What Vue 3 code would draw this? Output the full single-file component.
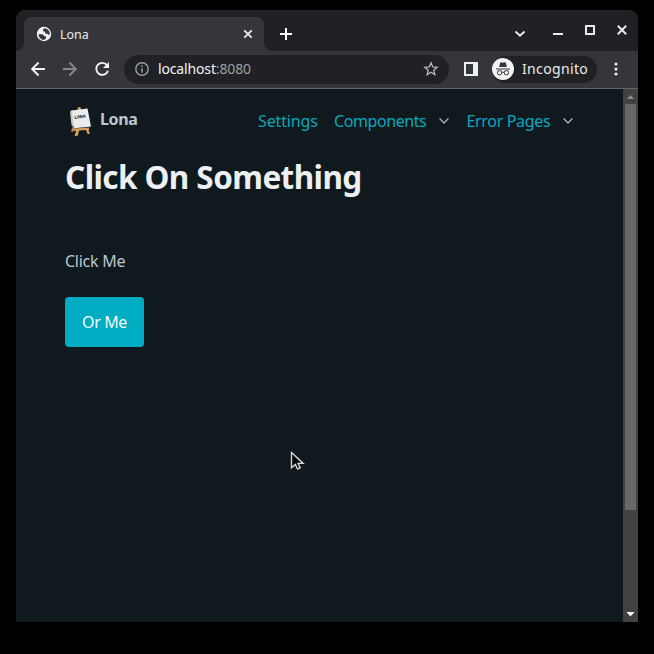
<script setup>
const menus = [
  { label: 'Settings', cls: 'settings', arrow: false },
  { label: 'Components', cls: 'components', arrow: true },
  { label: 'Error Pages', cls: 'errors', arrow: true },
]
</script>

<template>
  <div class="desktop">
    <div class="window">
      <header class="strip">
        <div class="tab">
          <svg class="globe" viewBox="0 0 16 16" width="16" height="16">
            <circle cx="8" cy="8" r="7.2" fill="#f1f3f4" />
            <path d="M2.500 8.300h3.400q2 .1 2.100 2h2v1.900l-2 1.800q-4.800-.4-5.500-5.700zM8 2.300l-1 1.500v1.500l2 .2.300 2.200h2.200l.8 1h1.400Q14 4.200 10.500 2.800z" fill="#35363a" />
          </svg>
          <span class="tab-title">Lona</span>
          <svg class="tab-close" viewBox="0 0 10 10" width="10" height="10"><path d="M1.300 1.300 8.700 8.700M8.700 1.300 1.300 8.700" stroke="#f1f3f4" stroke-width="1.700" /></svg>
        </div>
        <svg class="plus" viewBox="0 0 12 12" width="12" height="12"><path d="M6 0v12M0 6h12" stroke="#fff" stroke-width="2" /></svg>
        <svg class="controls" viewBox="0 0 120 20" width="120" height="20">
          <path d="m5.500 11.500 4.500 4.300 4.500-4.300" fill="none" stroke="#e8eaed" stroke-width="1.900" />
          <path d="M43 14h10" stroke="#e8eaed" stroke-width="2" />
          <rect x="76" y="6" width="8" height="8" fill="none" stroke="#e8eaed" stroke-width="2" />
          <path d="m107.800 5.800 8.400 8.400m0-8.400-8.400 8.400" stroke="#e8eaed" stroke-width="2" />
        </svg>
      </header>

      <div class="toolbar">
        <svg class="nav" viewBox="0 0 84 18" width="84" height="18" fill="none" stroke-width="1.900">
          <path d="M15 9H2.200M8.600 2.500 2.100 9l6.500 6.500" stroke="#f1f3f4" />
          <path d="M33 9h12.800M39.400 2.500 45.900 9l-6.500 6.500" stroke="#85868a" />
          <path d="M77 5.100A6 6 0 1 0 78 10.700" stroke="#f1f3f4" />
          <path d="M79 2v6h-6z" fill="#f1f3f4" />
        </svg>
        <div class="omnibox">
          <svg viewBox="0 0 14 14" width="14" height="14">
            <circle cx="7" cy="7" r="6.200" fill="none" stroke="#9aa0a6" stroke-width="1.400" />
            <path d="M7 6.200v4.300M7 3.500v1.500" stroke="#9aa0a6" stroke-width="1.500" />
          </svg>
          <span class="url"><b>localhost</b>:8080</span>
          <svg class="star" viewBox="0 0 16 16" width="16" height="16"><path d="m8 1.800 1.750 4.100 4.450.4-3.400 2.900 1.050 4.400L8 11.250 4.150 13.600 5.200 9.200 1.800 6.300l4.450-.4z" fill="none" stroke="#b4b7bb" stroke-width="1.300" /></svg>
        </div>
        <svg class="panel" viewBox="0 0 14 14" width="14" height="14"><path d="M1 1h12v12H1z" fill="none" stroke="#edf0f3" stroke-width="2" /><path d="M9 0h5v14H9z" fill="#edf0f3" /></svg>
        <div class="profile">
          <svg viewBox="0 0 22 22" width="22" height="22">
            <circle cx="11" cy="11" r="11" fill="#f1f3f4" />
            <path d="m7.100 9 1.100-4.200q.3-.8 1.100-.5l1.700.4 1.700-.4q.8-.3 1.100.5L14.900 9z" fill="#35363a" />
            <path d="M4 11h14" stroke="#35363a" stroke-width="1.100" />
            <g fill="none" stroke="#35363a" stroke-width="1"><circle cx="7.600" cy="14.700" r="2.200" /><circle cx="14.400" cy="14.700" r="2.200" /><path d="M9.900 14.500q1.100-.8 2.200 0" /></g>
          </svg>
          <span>Incognito</span>
        </div>
        <svg class="dots" viewBox="0 0 4 14" width="4" height="14" fill="#e8eaed"><circle cx="2" cy="2" r="1.600" /><circle cx="2" cy="7" r="1.600" /><circle cx="2" cy="12" r="1.600" /></svg>
      </div>

      <div class="view">
        <main class="page">
          <nav class="navbar">
            <svg class="logo" viewBox="0 0 24 31" width="24" height="31">
              <path d="m8.500 1.500 3-.5.5 3-3 .5z" fill="#dca55c" />
              <path d="M4 19.500 6.500 20 4 26l-2-.7z" fill="#b98242" />
              <path d="M4.500 22.500 20 21.500v2.300L4.500 25z" fill="#cf9a55" />
              <path d="m7.500 24 2.800-.2L8.500 30l-2.900-.3zM16.500 23l2.600-.3 1.700 4.800-2 .7z" fill="#dca55c" />
              <path d="M1 5.500 3.500 4 6 22l-3.500-3z" fill="#c7c8ca" />
              <path d="M2.500 4.500 18.500 2.500l3.500 18L5.500 22.300z" fill="#ebebed" />
              <text x="5.300" y="12.800" transform="rotate(-7 6 12)">LONA</text>
            </svg>
            <span class="brand">Lona</span>
            <div class="links">
              <span v-for="m in menus" :key="m.label" class="link" :class="m.cls">
                <span class="label">{{ m.label }}</span>
                <svg v-if="m.arrow" viewBox="0 0 10 6" width="10" height="6"><path d="m.6.600 4.400 4.300L9.400.600" fill="none" stroke="#a2afb9" stroke-width="1.400" /></svg>
              </span>
            </div>
          </nav>
          <h1>Click On Something</h1>
          <p>Click Me</p>
          <button><span>Or Me</span></button>
        </main>
        <aside class="scrollbar">
          <svg viewBox="0 0 15 15" width="15" height="15"><path d="m7.500 6 3.500 4H4z" fill="#8b8b8b" /></svg>
          <div class="thumb"></div>
          <svg viewBox="0 0 15 15" width="15" height="15"><path d="M3.500 5h8l-4 4.500z" fill="#fff" /></svg>
        </aside>
      </div>
    </div>
    <svg class="cursor" viewBox="0 0 16 22" width="16" height="22"><path d="M1.500 1.500v15.300l3.800-3.400 2.300 4.600 2.600-1.300-2.200-4.300h5.100z" fill="#050607" stroke="#d4d4d4" stroke-width="1.400" /></svg>
  </div>
</template>

<style>
body { background: #000; overflow: hidden; }
</style>

<style scoped>
* { box-sizing: border-box; }
svg { display: block; flex: none; }
.desktop { position: relative; width: 654px; height: 654px; padding: 10px 16px 32px; background: #000; font-family: "Noto Sans", "Open Sans", sans-serif; white-space: nowrap; }
.window { display: flex; flex-direction: column; height: 612px; border-radius: 9px 9px 0 0; overflow: hidden; background: #10191e; }
.strip { display: flex; height: 41px; padding: 7px 0 0 8px; background: #202124; }
.tab { position: relative; display: flex; align-items: center; width: 240px; height: 34px; padding-left: 12px; border-radius: 8px 8px 0 0; background: #35363a; }
.tab::before, .tab::after { content: ""; position: absolute; bottom: 0; width: 8px; height: 8px; }
.tab::before { left: -8px; background: radial-gradient(circle at 0 0, #202124 7.500px, #35363a 8px); }
.tab::after { right: -8px; background: radial-gradient(circle at 100% 0, #202124 7.500px, #35363a 8px); }
.tab-title { width: 160px; margin-left: 8px; padding-top: 1px; font-size: 12.500px; line-height: 18px; color: #e8eaed; }
.tab-close { margin-left: 23px; }
.plus { margin: 11px 0 0 16px; }
.controls { margin: 3px 8px 0 auto; }
.toolbar { display: flex; align-items: center; height: 38px; padding: 0 20px 1px 14px; background: #35363a; border-bottom: 1px solid #626568; }
.omnibox { display: flex; align-items: center; width: 325px; height: 29px; margin-left: 10px; padding: 0 10px 0 11px; border-radius: 15px; background: #202124; }
.url { margin-left: 9px; font-size: 14px; letter-spacing: -.15px; line-height: 20px; color: #9aa0a6; }
.url b { font-weight: 400; color: #f1f3f4; }
.star { margin-left: auto; }
.panel { margin-left: 15px; }
.profile { display: flex; align-items: center; width: 105px; height: 27px; margin-left: 14px; border-radius: 14px; background: #202124; color: #e8eaed; font-size: 14px; }
.profile span { margin: -1px 0 0 8px; letter-spacing: .35px; }
.dots { margin-left: auto; }
.view { display: flex; flex: 1; }
.page { flex: 1; padding: 11px 49px 0; color: #bbc6ce; font-size: 16px; }
.navbar { display: flex; align-items: center; height: 42px; }
.logo { margin: 0 7px 0 4px; }
.logo text { font: bold 4.800px "Liberation Mono", monospace; fill: #222; }
.brand { font-weight: 700; line-height: 24px; margin-bottom: 4px; letter-spacing: -.4px; }
.links { display: flex; margin-left: auto; }
.link { display: flex; align-items: center; height: 24px; color: #09a8bc; }
.link svg { margin-left: auto; }
.settings { width: 76px; letter-spacing: -.15px; }
.components { width: 132.500px; padding-right: 18px; letter-spacing: -.42px; }
.errors { width: 107.500px; padding-right: 1px; letter-spacing: -.33px; }
.label { flex: none; }
h1 { margin: 13px 0 0; font-size: 31.500px; font-weight: 700; line-height: 44px; letter-spacing: -.58px; color: #edf0f3; }
p { margin: 50px 0 0; line-height: 24px; letter-spacing: -.25px; }
button { display: flex; align-items: center; justify-content: center; width: 79px; height: 50px; margin-top: 24px; padding: 0; border: 0; border-radius: 4px; background: #00acc1; color: #f3fcfd; font: 16px "Noto Sans", sans-serif; letter-spacing: -.4px; }
.scrollbar { display: flex; flex-direction: column; width: 15px; background: #424242; }
.thumb { width: 11px; height: 406px; margin: 0 2px auto; background: #686868; }
.cursor { position: absolute; left: 290px; top: 451px; }
</style>
